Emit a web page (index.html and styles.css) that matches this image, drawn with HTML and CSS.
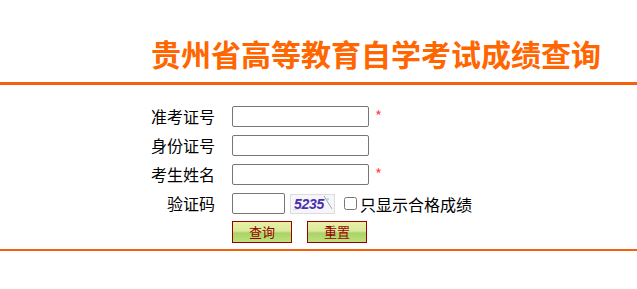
FILE: index.html
```html
<!DOCTYPE html>
<html lang="zh-CN">
<head>
  <meta charset="UTF-8">
  <title>贵州省高等教育自学考试成绩查询</title>
  <link rel="stylesheet" href="styles.css">
</head>
<body>

<header class="top">
  <h1>贵州省高等教育自学考试成绩查询</h1>
</header>

<!-- 查询表单 -->
<form class="query-form" onsubmit="return false;">
  <div class="row">
    <label class="label">准考证号</label>
    <input type="text" class="field">
    <span class="required">*</span>
  </div>
  <div class="row">
    <label class="label">身份证号</label>
    <input type="text" class="field">
  </div>
  <div class="row">
    <label class="label">考生姓名</label>
    <input type="text" class="field">
    <span class="required">*</span>
  </div>
  <div class="row">
    <label class="label">验证码</label>
    <input type="text" class="field field-code">
    <span class="captcha">
      <svg class="captcha-noise" width="43" height="18" viewBox="0 0 43 18">
        <path d="M33 1 L41 14" stroke="#9aa" stroke-width="1" fill="none"/>
        <path d="M2 15 L12 13" stroke="#cdd" stroke-width="1" fill="none"/>
        <circle cx="37" cy="4" r="0.8" fill="#6c6"/>
      </svg>
      <span class="captcha-text">5235</span>
    </span>
    <label class="only-pass"><input type="checkbox">只显示合格成绩</label>
  </div>
  <div class="row buttons">
    <button type="button" class="btn">查询</button>
    <button type="reset" class="btn">重置</button>
  </div>
</form>

<div class="bottom-line"></div>

</body>
</html>
```

FILE: styles.css
```css
:root {
  --orange: #ff6600;
  --line-orange: #f5600f;
  --dark-red: #990000;
  --text-color: #000;
}

body {
  margin: 0;
  font-family: "Noto Sans CJK SC", "Microsoft YaHei", sans-serif;
  color: var(--text-color);
  background: #fff;
}

.top {
  border-bottom: 3px solid var(--line-orange);
  padding-top: 25px;
}

.top h1 {
  margin: 0;
  padding-left: 151px;
  font-size: 30px;
  line-height: 57px;
  font-weight: 700;
  color: var(--orange);
}

.query-form {
  margin: 21px 0 0;
}

.row {
  display: flex;
  align-items: center;
  height: 21px;
  margin-bottom: 8px;
}

.label {
  flex: none;
  width: 232px;
  padding-right: 17px;
  box-sizing: border-box;
  text-align: right;
  font-size: 16px;
  line-height: 21px;
}

.field {
  flex: none;
  width: 137px;
  height: 21px;
  box-sizing: border-box;
  border: 1px solid #767676;
  border-radius: 2px;
  padding: 0 3px;
  margin: 0;
  font-size: 13px;
}

.field-code {
  width: 53px;
}

.required {
  margin-left: 6px;
  color: #ff4d4d;
  font-size: 15px;
  line-height: 1;
  align-self: flex-start;
  padding-top: 2px;
}

.captcha {
  position: relative;
  margin-left: 5px;
  width: 45px;
  height: 20px;
  box-sizing: border-box;
  border: 1px solid #dcdcdc;
  background: #f6f6fa;
  display: flex;
  align-items: center;
  overflow: hidden;
}

.captcha-noise {
  position: absolute;
  left: 0;
  top: 0;
}

.captcha-text {
  position: relative;
  padding-left: 3px;
  font-family: "Liberation Sans", Arial, sans-serif;
  font-style: italic;
  font-weight: 700;
  font-size: 14px;
  color: #4a2fb0;
  letter-spacing: -0.3px;
}

.only-pass {
  display: flex;
  align-items: center;
  margin-left: 5px;
  font-size: 16px;
}

.only-pass input {
  width: 13px;
  height: 13px;
  margin: 0 3px 0 4px;
}

.buttons {
  padding-left: 232px;
  height: 22px;
  margin-top: -1px;
  margin-bottom: 0;
  gap: 15px;
}

.btn {
  width: 60px;
  height: 22px;
  padding: 0;
  border: 1px solid var(--dark-red);
  background: linear-gradient(to bottom, #e8f0a6 0%, #dbe99a 45%, #a9d466 55%, #bfe07c 100%);
  color: var(--dark-red);
  font-family: "Noto Sans CJK SC", sans-serif;
  font-size: 13px;
  line-height: 20px;
  cursor: pointer;
}

.bottom-line {
  margin-top: 6px;
  border-top: 2px solid var(--line-orange);
}
```
